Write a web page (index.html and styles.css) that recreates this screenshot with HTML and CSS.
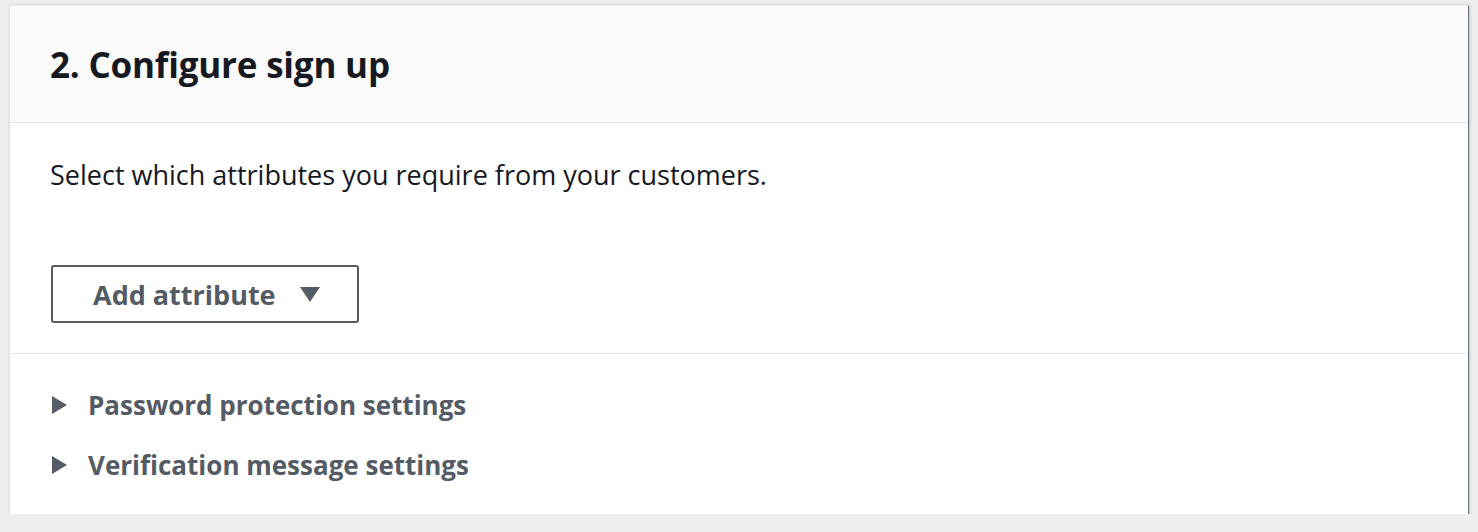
FILE: index.html
```html
<!DOCTYPE html>
<html>
<head>
<meta charset="utf-8">
<link rel="stylesheet" href="styles.css">
</head>
<body>
<div class="card">
  <div class="card-header">
    <h2 class="title">2. Configure sign up</h2>
  </div>
  <div class="card-body">
    <p class="desc">Select which attributes you require from your customers.</p>
    <button class="dropdown-btn">Add attribute <span class="caret"></span></button>
  </div>
  <div class="card-footer">
    <div class="expander"><span class="tri"></span>Password protection settings</div>
    <div class="expander"><span class="tri"></span>Verification message settings</div>
  </div>
</div>
</body>
</html>
```

FILE: styles.css
```css
html, body {
  margin: 0;
  padding: 0;
  background: #eef0f0;
  font-family: "Open Sans", "Noto Sans", sans-serif;
}
body {
  padding: 5px 10px 0 10px;
}
.card {
  background: #fff;
  border-top: 1px solid #e6e8e8;
  box-shadow: 1px 1px 1px 0 rgba(0, 28, 36, 0.5), 1px 1px 4px 1px rgba(0, 28, 36, 0.15);
  height: 509px;
  box-sizing: border-box;
  display: flex;
  flex-direction: column;
}
.card-header {
  background: #fafafa;
  border-bottom: 1px solid #e5e7e7;
  height: 117px;
  box-sizing: border-box;
  display: flex;
  align-items: center;
  padding: 0 40px;
}
.title {
  margin: 0;
  font-size: 35px;
  font-weight: 700;
  color: #16191f;
  letter-spacing: -0.2px;
}
.card-body {
  padding: 36px 40px 30px 40px;
  border-bottom: 1px solid #e5e7e7;
}
.desc {
  margin: 0 0 74px 0;
  font-size: 27px;
  color: #16191f;
  line-height: 32px;
}
.dropdown-btn {
  font-family: inherit;
  display: inline-flex;
  align-items: center;
  gap: 24px;
  height: 58px;
  padding: 0 37px 0 40px;
  margin-left: 1px;
  background: #fff;
  border: 2px solid #545b64;
  border-radius: 3px;
  color: #545b64;
  font-size: 27px;
  font-weight: 700;
}
.caret {
  width: 0;
  height: 0;
  border-left: 10px solid transparent;
  border-right: 10px solid transparent;
  border-top: 15px solid #545b64;
}
.card-footer {
  padding: 33px 40px 0 42px;
  display: flex;
  flex-direction: column;
  gap: 24px;
}
.expander {
  display: flex;
  align-items: center;
  gap: 21px;
  font-size: 26px;
  font-weight: 700;
  color: #545b64;
  line-height: 36px;
}
.tri {
  width: 0;
  height: 0;
  border-top: 9px solid transparent;
  border-bottom: 9px solid transparent;
  border-left: 15px solid #545b64;
}
```
